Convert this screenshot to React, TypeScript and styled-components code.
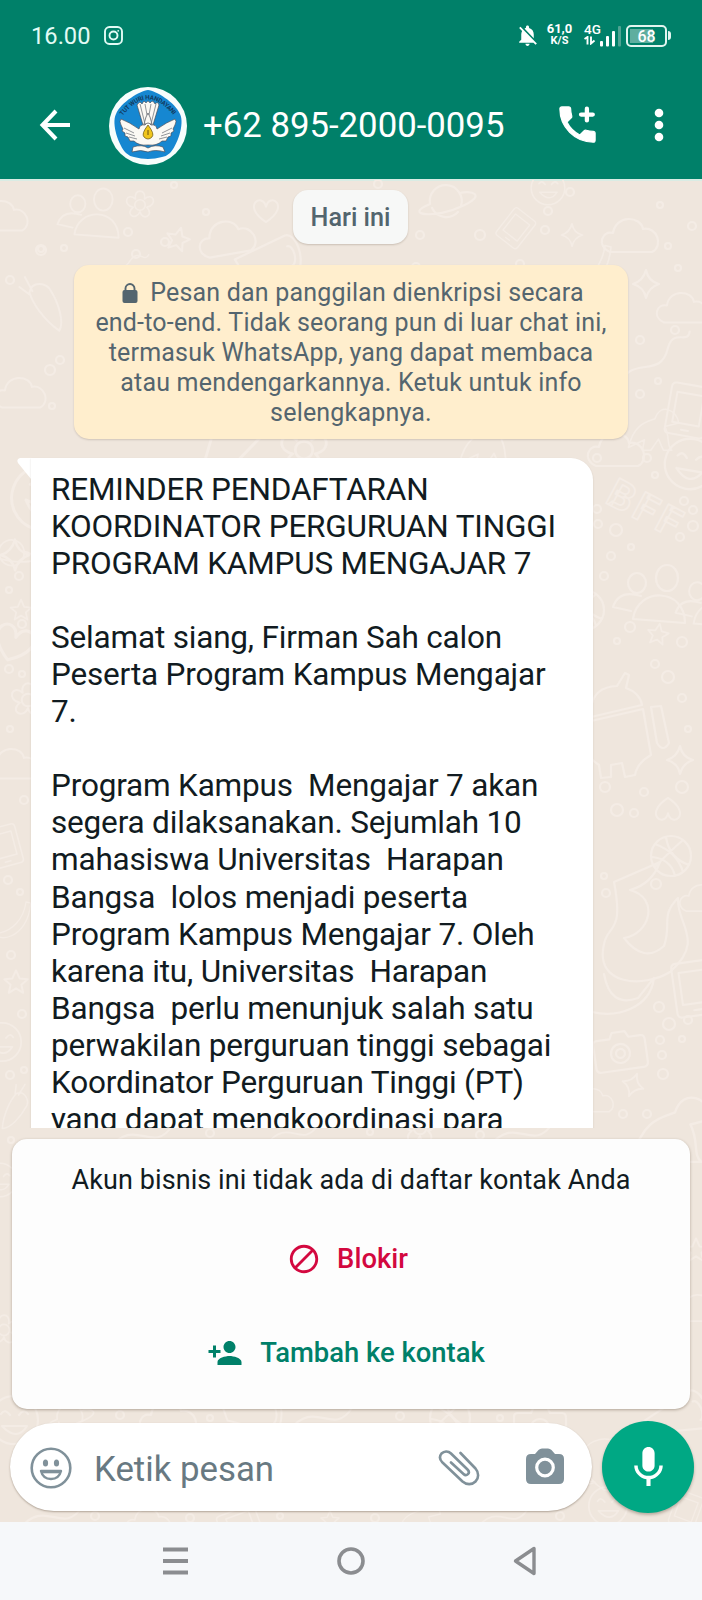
import React from "react";
import styled, { createGlobalStyle } from "styled-components";
import { MdBlock, MdMic, MdNotificationsOff, MdPersonAdd } from "react-icons/md";

const GlobalStyle = createGlobalStyle`
  * { box-sizing: border-box; }
  body { margin: 0; }
  button { border: 0; padding: 0; background: none; color: inherit; font: inherit; display: flex; }
  svg { display: block; }
`;

const Screen = styled.div`
  width: 702px;
  height: 1600px;
  display: flex;
  flex-direction: column;
  overflow: hidden;
  font-family: Roboto, "Liberation Sans", sans-serif;
  background: #efe6dd;
`;

const Header = styled.header`
  height: 179px;
  flex: none;
  background: #008069;
  color: #fff;
`;

const StatusBar = styled.div`
  height: 71px;
  display: flex;
  align-items: center;
  padding: 0 31px 0 31px;
`;

const Clock = styled.span`
  font-size: 23.7px;
  line-height: 28px;
  color: #e2fbf5;
  margin-right: 13px;
`;

const StatusRight = styled.div`
  margin-left: auto;
  display: flex;
  align-items: center;
`;

const NetSpeed = styled.div`
  width: 27px;
  margin: -3px 11px 0 6px;
  text-align: center;
  font-weight: 700;
  line-height: 13px;
  font-size: 13px;
`;

const NetUnit = styled.div`
  font-size: 11px;
  line-height: 12px;
`;

const Network = styled.div`
  width: 18px;
  margin-top: -3px;
  font-size: 13.5px;
  line-height: 13px;
  font-weight: 500;
`;

const Bars = styled.svg`
  margin: 0 5px 0 -3px;
`;

const Battery = styled.div`
  width: 41px;
  height: 22px;
  border: 2px solid #e2f5f0;
  border-radius: 5px;
  padding: 2px;
  background: linear-gradient(#5fae9f, #5fae9f) 2px 2px / 23px 14px no-repeat;
  font-size: 16px;
  line-height: 15px;
  font-weight: 500;
  text-align: center;
`;

const BatteryNub = styled.div`
  width: 3px;
  height: 9px;
  margin-left: 1px;
  border-radius: 0 3px 3px 0;
  background: #e2f5f0;
`;

const Toolbar = styled.div`
  height: 108px;
  display: flex;
  align-items: center;
  padding: 1px 33px 0 38px;
`;

const BackButton = styled.button`
  margin-right: 37px;
`;

const Title = styled.h1`
  margin: -2px 0 0 16px;
  font-size: 34.75px;
  font-weight: 400;
  line-height: 44px;
  white-space: nowrap;
`;

const CallButton = styled.button`
  margin-left: auto;
  margin-right: 48px;
`;

const Chat = styled.main`
  position: relative;
  height: 1343px;
  flex: none;
  display: flex;
  flex-direction: column;
  border-top: 2px solid #d9ece4;
  isolation: isolate;
`;

const Wallpaper = styled.svg`
  position: absolute;
  left: 0;
  top: -1px;
  z-index: -1;
`;

const Messages = styled.section`
  height: 947px;
  flex: none;
  overflow: hidden;
  display: flex;
  flex-direction: column;
`;

const DateChip = styled.div`
  align-self: center;
  flex: none;
  margin: 9px 1px 0 0;
  width: 115px;
  height: 54px;
  border-radius: 15px;
  background: #f7f8f7;
  box-shadow: 0 1px 2px rgba(60, 40, 20, 0.2);
  color: #53656e;
  font-size: 25.2px;
  font-weight: 500;
  line-height: 56px;
  text-align: center;
`;

const Notice = styled.div`
  align-self: center;
  flex: none;
  margin-top: 21px;
  width: 554px;
  height: 174px;
  padding-top: 13px;
  border-radius: 15px;
  background: #ffeecd;
  box-shadow: 0 1px 2px rgba(60, 40, 20, 0.18);
  color: #54656f;
  font-size: 25px;
  line-height: 30px;
  letter-spacing: 0.19px;
  text-align: center;
`;

const NoticeLine = styled.div`
  display: flex;
  justify-content: center;
  align-items: center;
  white-space: pre;
`;

const LockIcon = styled.svg`
  margin: 0 12px 0 4px;
`;

const BubbleRow = styled.div`
  display: flex;
  flex: none;
  align-items: flex-start;
  margin: 19px 0 0 17px;
`;

const Bubble = styled.article`
  width: 562px;
  height: 720px;
  padding: 12.5px 0 0 20px;
  background: #fff;
  border-radius: 0 22px 0 0;
  box-shadow: 0 1px 2px rgba(60, 40, 20, 0.16);
  color: #111b21;
  font-size: 31.5px;
  line-height: 37.1px;
  letter-spacing: -0.18px;
  white-space: pre;
`;

const ContactCard = styled.section`
  margin: 11px 12px 0;
  height: 270px;
  flex: none;
  display: flex;
  flex-direction: column;
  align-items: center;
  border-radius: 15px;
  background: #fdfdfd;
  box-shadow: 0 1px 3px rgba(60, 40, 20, 0.35);
`;

const CardText = styled.p`
  margin: 24px 0 45px;
  font-size: 27px;
  letter-spacing: 0.09px;
  line-height: 34px;
  color: #111b21;
  white-space: nowrap;
`;

const CardAction = styled.button<{ $color: string; $gap: number; $shift: number }>`
  height: 34px;
  margin-bottom: 60px;
  align-items: center;
  gap: ${(p) => p.$gap}px;
  padding-right: ${(p) => p.$shift}px;
  color: ${(p) => p.$color};
  font-size: 27.4px;
  font-weight: 500;
  white-space: nowrap;
`;

const Composer = styled.div`
  margin: 12px 8px 0 10px;
  height: 92px;
  display: flex;
  align-items: center;
  justify-content: space-between;
`;

const InputPill = styled.div`
  width: 582px;
  height: 88px;
  border-radius: 44px;
  background: #fff;
  box-shadow: 0 1px 2px rgba(60, 40, 20, 0.35);
  display: flex;
  align-items: center;
  padding: 1px 28px 0 20px;
`;

const Placeholder = styled.span`
  margin: 2px 0 0 22px;
  font-size: 34.8px;
  color: #687982;
  line-height: 44px;
`;

const AttachButton = styled.button`
  margin-left: auto;
  margin-right: 46px;
`;

const MicButton = styled.button`
  width: 92px;
  height: 92px;
  border-radius: 50%;
  background: #00a884;
  color: #fff;
  align-items: center;
  justify-content: center;
  box-shadow: 0 2px 3px rgba(60, 40, 20, 0.3);
`;

const NavBar = styled.nav`
  height: 78px;
  flex: none;
  background: #f6f8fa;
  display: flex;
  justify-content: space-between;
  align-items: center;
  padding: 0 165px 0 162px;
`;

const InstagramGlyph = () => (
  <svg width="19" height="19" viewBox="0 0 19 19" fill="none" stroke="#e2fbf5" strokeWidth="1.9">
    <rect x="1" y="1" width="17" height="17" rx="4.5" />
    <circle cx="9.5" cy="9.5" r="4" />
    <circle cx="14.2" cy="4.8" r="0.9" fill="#e2fbf5" stroke="none" />
  </svg>
);

const Avatar = () => (
  <svg width="78" height="78" viewBox="0 0 78 78">
    <defs>
      <path id="motto" d="M13.500 29 Q39 -4 65 29" />
    </defs>
    <circle cx="39" cy="39" r="39" fill="#f7fdfc" />
    <path d="M39 3 C47 4 66 15 71 27 C76 37 68 59 61 66 Q58 69 53 70 Q39 74 25 70 Q20 69 17 66 C10 59 2 37 7 27 C12 15 31 4 39 3Z" fill="#1687d1" />
    <text fontSize="6.3" fontWeight="700" fill="#123c62" fontFamily="Roboto, sans-serif">
      <textPath href="#motto" textLength="62">TUT WURI HANDAYANI</textPath>
    </text>
    <g fill="#fbf9f4" stroke="#4b4f5a" strokeWidth="0.7" strokeLinejoin="round">
      <path d="M34 38 L28 18 Q31 13 33 17 Q35 12 37 16 Q39 12 41 16 Q44 12 46 17 Q49 14 50 18 L44 38Z" />
      <path d="M37 30 L39 26 L41 30 L43 37 L35 37Z" />
      <path d="M36 38 Q31 37 30 42 Q20 35 12 32 Q10 34 12 38 L14 42 L13 44 L16 46 L16 49 L19 50 L21 54 L25 54 Q30 59 39 58 Q48 59 53 54 L57 54 L59 50 L62 49 L62 46 L65 44 L64 42 L66 38 Q68 34 66 32 Q58 35 48 42 Q47 37 42 38 Q39 34 36 38Z" />
      <path d="M24 60 Q33 57 39 61 Q46 57 54 60 L56 65 Q46 62 39 65 Q32 62 23 65Z" />
    </g>
    <path d="M31 17 L36 37 M36 17 L38 28 M42 17 L40 28 M47 17 L42 37 M15 41 L25 46 M17 46 L26 49 M20 50 L28 52 M63 41 L53 46 M61 46 L52 49 M58 50 L50 52" stroke="#777b82" strokeWidth="0.8" fill="none" />
    <path d="M39 38 Q46 47 43 50 Q39 54 35 50 Q32 47 39 38Z" fill="#f0c51c" stroke="#75621b" strokeWidth="0.8" />
    <path d="M39 43 V48" stroke="#6b500e" strokeWidth="1" />
  </svg>
);

/* One entry per wallpaper drawing: kind, centre x, centre y, scale, rotation. */
type Doodle = [string, number, number, number, number];

const shapes: Record<string, string> = {
  cloud: "M-22 14 C-36 8 -30 -8 -19 -5 C-16 -24 9 -22 11 -9 C25 -12 32 8 20 14Z",
  star: "M0 -13 L4 -4 L13 -3 L6 3 L8 12 L0 7 L-8 12 L-6 3 L-13 -3 L-4 -4Z",
  spark: "M0 -14 Q2 -3 13 0 Q3 3 0 14 Q-2 3 -13 0 Q-3 -3 0 -14Z",
  planet: "M-16 4 A16 16 0 1 1 15 6 M-16 4 C-45 16 -8 18 14 7 C44 -6 23 -10 14 -7 M-14 8 A16 16 0 0 0 12 12",
  banana: "M20 -30 C16 0 -4 18 -26 22 C-34 36 22 36 28 -28Z",
  flower: "M0 -7 A7 7 0 1 1 0 7 A7 7 0 1 1 0 -7 M-6 -8 C-9 -22 9 -22 6 -8 C18 -18 24 0 9 3 C20 14 3 22 0 9 C-6 22 -21 12 -9 3 C-24 0 -18 -18 -6 -8",
  camera: "M-22 -12 H-9 L-6 -18 H7 L10 -12 H22 Q26 -12 26 -7 V15 Q26 20 21 20 H-21 Q-26 20 -26 15 V-8 Q-26 -12 -22 -12Z M0 -6 A9 9 0 1 1 0 13 A9 9 0 1 1 0 -6 M0 -1 A4 4 0 1 1 0 8 A4 4 0 1 1 0 -1",
  ball: "M0 -20 A20 20 0 1 1 0 20 A20 20 0 1 1 0 -20 M-16 -12 Q6 -4 12 16 M12 -16 Q-4 -2 -16 11 M-5 -19 Q-2 2 18 9 M-19 1 Q0 3 4 20",
  face: "M0 -24 A24 24 0 1 1 0 24 A24 24 0 1 1 0 -24 M-13 -6 Q-9 -12 -4 -5 M5 -5 Q10 -12 14 -6 M-12 6 H13 Q3 22 -12 6",
  robot: "M-26 -12 Q-24 -34 0 -35 L8 -48 L12 -46 L9 -33 Q23 -28 25 -16 L-26 -4Z M-26 0 L26 -12 L34 34 Q20 42 18 54 L8 56 L5 42 L-6 44 V56 L-16 57 L-18 44 L-26 38Z M34 -14 L44 -15 L52 22 Q46 32 40 22Z",
  people: "M-12 -22 A9 10 0 1 1 -12 -2 A9 10 0 1 1 -12 -22 M18 -30 A11 13 0 1 1 18 -4 A11 13 0 1 1 18 -30 M-16 24 C-12 -8 36 -8 36 28Z M-18 16 L-36 12 Q-30 -6 -8 1",
  octopus: "M-18 -42 L28 -62 Q20 -40 -2 -34 C28 -26 18 10 -8 14 Q12 40 32 22 C40 0 28 -8 46 -26 C44 0 74 16 38 48 C12 64 -38 62 -28 20 C-24 0 -8 10 -18 -42 M-28 50 Q-22 84 6 74 L22 54 C18 84 -14 94 -40 88",
  phone: "M-17 -28 H17 Q22 -28 22 -23 V24 Q22 29 17 29 H-17 Q-22 29 -22 24 V-23 Q-22 -28 -17 -28Z M-15 -18 H15 V16 H-15Z M-4 23 H4",
  carrot: "M-22 20 C-14 2 2 -14 14 -20 C28 -20 28 -2 20 3 C8 14 -12 24 -22 20 M12 -20 L18 -32 M16 -17 L30 -28",
  trail: "M-42 16 C-15 -20 2 22 22 -8 C34 -25 42 -4 48 -16",
  heart: "M0 9 C-28 -9 -4 -25 0 -8 C4 -25 28 -9 0 9Z",
  horn: "M-30 -9 L24 -22 A10 20 0 1 1 26 18 L-25 5Z M24 -11 A5 10 0 1 1 25 9",
  dino: "M-38 25 C-30 -10 -10 -12 0 -16 C8 -40 32 -28 34 -10 L14 -5 C22 10 16 23 24 29 H12 L5 13 L-6 29 H-18 L-15 14Z",
};

const doodles: Doodle[] = [
  ["cloud", 4, 38, 0.9, 0], ["people", 88, 34, 0.85, 0], ["flower", 140, 25, 0.75, 0], ["star", 178, 59, 0.9, 15],
  ["cloud", 229, 60, 1, -10], ["heart", 266, 34, 0.9, 0], ["horn", 266, 82, 1, -12], ["planet", 446, 20, 1, 0],
  ["phone", 516, 48, 0.6, 38], ["spark", 572, 55, 0.8, 0], ["cloud", 632, 58, 1, 0], ["banana", 590, 88, 0.75, 0],
  ["spark", 646, 104, 1, 0], ["cloud", 684, 130, 0.9, 0], ["carrot", 45, 128, 0.9, -80], ["cloud", 22, 215, 0.9, 0],
  ["trail", 650, 183, 1, -20], ["phone", 688, 230, 0.9, 10], ["face", 44, 318, 1.35, 20], ["dino", 655, 250, 0.7, 0],
  ["trail", 115, 86, 0.7, 0], ["face", 548, 8, 0.7, 0], ["star", 100, 105, 0.8, 0],
  ["horn", 230, 268, 1.3, -60], ["flower", 304, 270, 1.25, 0], ["dino", 490, 263, 0.8, 0], ["planet", 12, 372, 0.8, 25],
  ["spark", 15, 375, 1.1, 0], ["star", 21, 430, 0.8, 0], ["heart", 12, 468, 1.4, 20], ["flower", 28, 520, 0.9, 0],
  ["cloud", 14, 586, 0.9, 0], ["phone", 4, 666, 0.7, -15], ["banana", 14, 740, 0.6, 0], ["star", 16, 802, 0.9, 0],
  ["face", 2, 862, 0.8, 0], ["carrot", 12, 930, 0.7, -20], ["cloud", 618, 272, 1, 0], ["face", 690, 284, 1.05, 10],
  ["people", 649, 415, 1, 0], ["people", 708, 422, 0.9, 0], ["star", 658, 454, 0.8, 10], ["ball", 584, 430, 1, 0],
  ["robot", 617, 541, 1, 0], ["spark", 680, 580, 1, 0], ["heart", 668, 626, 0.9, 180], ["ball", 671, 676, 1, 0],
  ["octopus", 632, 744, 1, 0], ["phone", 695, 808, 0.95, -8], ["cloud", 704, 720, 0.8, 0], ["camera", 620, 870, 1, -8],
  ["spark", 633, 905, 0.85, 20], ["dino", 675, 950, 1.1, 0], ["cloud", 595, 922, 0.7, 0],
  ["trail", 150, 954, 1, 0], ["trail", 300, 952, 0.8, 0], ["flower", 420, 948, 0.9, 0], ["trail", 530, 952, 1, 0],
  ["face", 0, 1000, 0.7, 0], ["star", 696, 1070, 0.9, 0], ["cloud", 700, 1130, 0.8, 0], ["flower", 4, 1150, 0.8, 0],
  ["face", 14, 1240, 1, 0], ["planet", 70, 1236, 0.8, 0], ["cloud", 170, 1240, 1, 0], ["horn", 250, 1236, 0.9, 0],
  ["trail", 330, 1236, 1, 0], ["ball", 450, 1238, 1, 0], ["camera", 540, 1245, 1, 0], ["octopus", 620, 1270, 0.7, 60],
  ["face", 608, 1326, 0.8, 0], ["horn", 674, 1240, 1, -20], ["trail", 60, 1335, 1, 0], ["cloud", 150, 1344, 0.8, 0],
  ["phone", 240, 1345, 0.7, 70], ["star", 330, 1340, 0.7, 0], ["dino", 420, 1340, 0.6, 0], ["trail", 510, 1336, 0.8, 0],
  ["phone", 686, 1330, 0.6, 20],
];

/* Small rings scattered between the drawings. */
const rings: [number, number, number][] = [
  [128, 52, 4], [136, 74, 4], [174, 5, 3], [206, 32, 3], [165, 62, 4], [41, 69, 3], [64, 68, 3], [378, 4, 4],
  [420, 55, 4], [416, 87, 4], [480, 55, 5], [548, 31, 4], [545, 50, 4], [520, 84, 4], [570, 12, 4], [660, 25, 3],
  [692, 46, 4], [678, 88, 3], [668, 66, 3], [10, 100, 4], [41, 70, 5], [60, 180, 4], [50, 190, 5], [52, 226, 3],
  [640, 160, 4], [675, 150, 4], [658, 201, 3], [640, 214, 4], [597, 278, 4], [647, 278, 4], [655, 295, 3],
  [597, 329, 4], [598, 344, 4], [616, 350, 6], [631, 367, 3], [611, 376, 4], [604, 396, 4], [684, 321, 4],
  [693, 330, 4], [693, 346, 5], [680, 357, 4], [630, 447, 5], [617, 461, 3], [682, 462, 5], [655, 484, 4],
  [668, 497, 6], [682, 518, 4], [688, 549, 3], [605, 607, 5], [617, 630, 6], [634, 633, 4], [644, 612, 4],
  [682, 607, 6], [656, 704, 5], [604, 696, 3], [606, 713, 4], [659, 827, 5], [669, 844, 6], [688, 840, 4],
  [660, 860, 4], [682, 859, 3], [662, 875, 4], [663, 894, 5], [623, 934, 4], [647, 934, 4],
  [19, 396, 4], [9, 410, 3], [22, 444, 4], [9, 489, 4], [22, 494, 3], [10, 549, 3], [24, 620, 4], [8, 700, 4],
  [20, 712, 3], [11, 775, 4], [22, 834, 4], [10, 895, 4], [24, 890, 3], [11, 960, 3], [210, 953, 4], [370, 952, 3],
  [480, 955, 4], [120, 1235, 4], [210, 1238, 3], [400, 1236, 4], [500, 1238, 3], [95, 1336, 4], [190, 1338, 4],
  [280, 1336, 3], [375, 1338, 4], [560, 1336, 4],
];

const DoodleWallpaper = () => (
  <Wallpaper width="702" height="1342" viewBox="0 0 702 1342" fill="none" stroke="#f4ece5" strokeWidth="2.2" strokeLinecap="round" strokeLinejoin="round">
    {doodles.map(([kind, x, y, scale, angle], i) => (
      <path key={i} d={shapes[kind]} transform={`translate(${x} ${y}) rotate(${angle}) scale(${scale})`} />
    ))}
    {rings.map(([x, y, r], i) => (
      <circle key={i} cx={x} cy={y} r={r} />
    ))}
    <text x="604" y="322" transform="rotate(28 604 322)" fontFamily="Roboto, sans-serif" fontWeight="700" fontSize="40" letterSpacing="4" strokeWidth="1.8">
      BFF
    </text>
  </Wallpaper>
);

const noticeLines = [
  "Pesan dan panggilan dienkripsi secara",
  "end-to-end. Tidak seorang pun di luar chat ini,",
  "termasuk WhatsApp, yang dapat membaca",
  "atau mendengarkannya. Ketuk untuk info",
  "selengkapnya.",
];

const message = `REMINDER PENDAFTARAN
KOORDINATOR PERGURUAN TINGGI
PROGRAM KAMPUS MENGAJAR 7

Selamat siang, Firman Sah calon
Peserta Program Kampus Mengajar
7.

Program Kampus  Mengajar 7 akan
segera dilaksanakan. Sejumlah 10
mahasiswa Universitas  Harapan
Bangsa  lolos menjadi peserta
Program Kampus Mengajar 7. Oleh
karena itu, Universitas  Harapan
Bangsa  perlu menunjuk salah satu
perwakilan perguruan tinggi sebagai
Koordinator Perguruan Tinggi (PT)
yang dapat mengkoordinasi para`;

export default function App() {
  return (
    <Screen>
      <GlobalStyle />
      <Header>
        <StatusBar>
          <Clock>16.00</Clock>
          <InstagramGlyph />
          <StatusRight>
            <MdNotificationsOff size={25} />
            <NetSpeed>
              61,0
              <NetUnit>K/S</NetUnit>
            </NetSpeed>
            <Network>
              4G
              <svg width="12" height="9" viewBox="0 0 12 9" fill="none" stroke="#fff" strokeWidth="1.9">
                <path d="M0.500 3 L3.500 1 V8.500 M7 0.500 V7.500 L10.500 4.500" />
              </svg>
            </Network>
            <Bars width="22" height="22" viewBox="0 0 22 22" fill="#fff">
              <rect x="1" y="16" width="3" height="5.500" rx="1" />
              <rect x="7" y="11" width="3" height="10.500" rx="1" />
              <rect x="13" y="6" width="3" height="15.500" rx="1" />
              <rect x="19" y="1" width="3" height="20.500" rx="1" fill="#4fa393" />
            </Bars>
            <Battery>68</Battery>
            <BatteryNub />
          </StatusRight>
        </StatusBar>
        <Toolbar>
          <BackButton aria-label="Kembali">
            <svg width="34" height="34" viewBox="0 0 34 34" fill="none" stroke="#fff" strokeWidth="4">
              <path d="M32 16 H5 M18 2 L4.500 16 L18 30" />
            </svg>
          </BackButton>
          <Avatar />
          <Title>+62 895-2000-0095</Title>
          <CallButton aria-label="Panggil">
            <svg width="47" height="47" viewBox="0 0 24 24" fill="#fff">
              <path d="M20 15.500c-1.250 0-2.450-.2-3.570-.57-.35-.12-.75-.03-1.020.24l-2.200 2.200c-2.830-1.440-5.150-3.750-6.590-6.590l2.200-2.200c.28-.28.36-.67.25-1.020C8.700 6.450 8.500 5.250 8.500 4c0-.55-.45-1-1-1H4c-.55 0-1 .45-1 1 0 9.390 7.610 17 17 17 .55 0 1-.45 1-1v-3.500c0-.55-.45-1-1-1z" stroke="#fff" strokeWidth="0.600" strokeLinejoin="round" transform="translate(0 -0.500)" />
              <path d="M16.800 3.400v6M13.800 6.400h6" stroke="#fff" strokeWidth="2.200" strokeLinecap="round" />
            </svg>
          </CallButton>
          <button aria-label="Menu">
            <svg width="20" height="36" viewBox="0 0 20 36" fill="#fff">
              <circle cx="10" cy="5" r="4.300" />
              <circle cx="10" cy="17" r="4.300" />
              <circle cx="10" cy="29" r="4.300" />
            </svg>
          </button>
        </Toolbar>
      </Header>

      <Chat>
        <DoodleWallpaper />
        <Messages>
          <DateChip>Hari ini</DateChip>
          <Notice>
            {noticeLines.map((line, i) => (
              <NoticeLine key={line}>
                {i === 0 && (
                  <LockIcon width="16" height="20" viewBox="0 0 16 20">
                    <rect x="0.500" y="7" width="15" height="13" rx="2" fill="#54656f" />
                    <path d="M3.500 8 V5.500 a4.500 4.500 0 0 1 9 0 V8" fill="none" stroke="#54656f" strokeWidth="1.900" />
                  </LockIcon>
                )}
                {line}
              </NoticeLine>
            ))}
          </Notice>
          <BubbleRow>
            <svg width="14" height="24" viewBox="0 0 14 24" fill="#fff">
              <path d="M14 0 H3 Q-1 1 1 5 L14 21Z" />
            </svg>
            <Bubble>{message}</Bubble>
          </BubbleRow>
        </Messages>

        <ContactCard>
          <CardText>Akun bisnis ini tidak ada di daftar kontak Anda</CardText>
          <CardAction $color="#d3083f" $gap={16} $shift={7}>
            <MdBlock size={34} />
            Blokir
          </CardAction>
          <CardAction $color="#008069" $gap={17} $shift={10}>
            <MdPersonAdd size={36} />
            Tambah ke kontak
          </CardAction>
        </ContactCard>

        <Composer>
          <InputPill>
            <svg width="42" height="42" viewBox="0 0 42 42" fill="none" stroke="#80919a" strokeWidth="2.600">
              <circle cx="21" cy="21" r="19.300" />
              <ellipse cx="15.500" cy="16" rx="2.600" ry="3.600" fill="#80919a" stroke="none" />
              <ellipse cx="26.500" cy="16" rx="2.600" ry="3.600" fill="#80919a" stroke="none" />
              <path d="M11 24 H31 Q29 32 21 32 Q13 32 11 24Z" strokeWidth="2.400" strokeLinejoin="round" />
              <path d="M12 25.500 H30" strokeWidth="1.600" />
            </svg>
            <Placeholder>Ketik pesan</Placeholder>
            <AttachButton aria-label="Lampirkan">
              <svg width="42" height="38" viewBox="0 0 42 38" fill="none" stroke="#80919a" strokeWidth="2.600" strokeLinecap="round" strokeLinejoin="round">
                <path d="M22.500 4 L37.500 19.500 C41 23.500 41 29 37.500 32.500 C34 36 28.500 36 24.500 32.500 L4.500 13.500 C1.500 10.500 1.500 7 3.500 4.500 C6 2 10 1.500 13 4.500 L29.500 20.500 C33 24 28.500 28 25.500 25 L13 13.500" />
              </svg>
            </AttachButton>
            <svg width="38" height="39" viewBox="0 0 38 39">
              <path d="M5 6 H9 L12.500 2 Q14 0.500 16 0.500 H22 Q24 0.500 25.500 2 L29 6 H33 Q38 6 38 11 V31 Q38 36 33 36 H5 Q0 36 0 31 V11 Q0 6 5 6Z" fill="#80919a" />
              <circle cx="19" cy="19.500" r="8.300" fill="#80919a" stroke="#fff" strokeWidth="3.200" />
            </svg>
          </InputPill>
          <MicButton aria-label="Rekam">
            <MdMic size={49} />
          </MicButton>
        </Composer>
      </Chat>

      <NavBar>
        <svg width="27" height="28" viewBox="0 0 27 28" stroke="#8b8d90" strokeWidth="3.800">
          <path d="M1 2.500 H26 M1 14 H26 M1 25.500 H26" />
        </svg>
        <svg width="28" height="28" viewBox="0 0 28 28" fill="none" stroke="#8b8d90" strokeWidth="3.600">
          <circle cx="14" cy="14" r="12" />
        </svg>
        <svg width="24" height="30" viewBox="0 0 24 30" fill="none" stroke="#8b8d90" strokeWidth="3.400" strokeLinejoin="round">
          <path d="M2.500 15 L21 2.500 V27.500Z" />
        </svg>
      </NavBar>
    </Screen>
  );
}
